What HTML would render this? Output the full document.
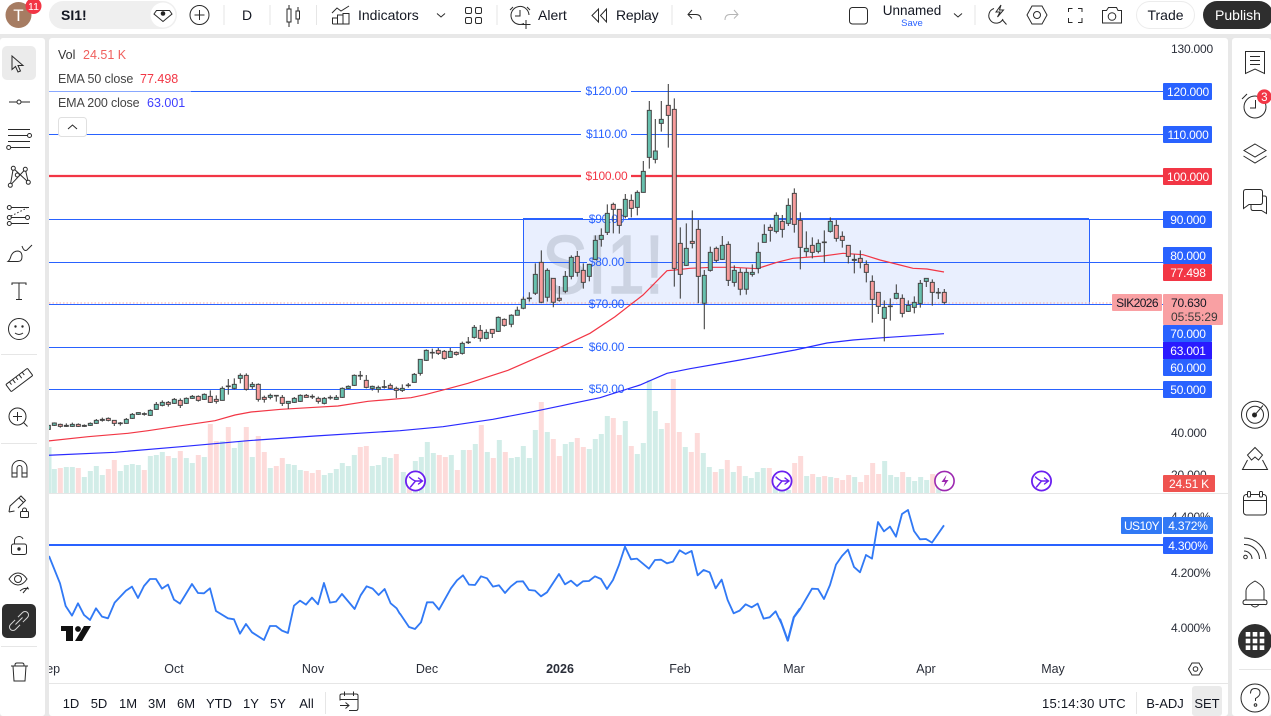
<!DOCTYPE html>
<html><head><meta charset="utf-8"><title>SI1!</title>
<style>
html,body{margin:0;padding:0;background:#e8e8e8;overflow:hidden}
svg{display:block}
text{font-family:"Liberation Sans",sans-serif}
.ax{font-size:12px;fill:#2a2e39;letter-spacing:-.2px}
.lb{font-size:12px;fill:#fff;letter-spacing:-.2px;text-anchor:middle}
.tb{font-size:14px;fill:#131722}
.bb{font-size:13px;fill:#131722;text-anchor:middle}
.tm{font-size:12.5px;fill:#2a2e39;text-anchor:middle}
.pr{font-size:12px;letter-spacing:-.2px;text-anchor:middle;fill:#2962ff}
.lg{font-size:12.5px}
.ic{fill:none;stroke:#2a2a2a;stroke-width:1}
.w{fill:none;stroke:#454545;stroke-width:3.3}
.g{fill:#67c0ae;stroke:#454545;stroke-width:3}
.r{fill:#f89c9c;stroke:#454545;stroke-width:3}
.vg{fill:none;stroke:#d2ede8;stroke-width:15}
.vr{fill:none;stroke:#fddbda;stroke-width:15}
</style></head><body>
<svg width="1271" height="716" viewBox="0 0 1271 716" xmlns="http://www.w3.org/2000/svg">
<rect width="1271" height="716" fill="#e8e8e8"/>
<!-- panels -->
<rect x="0" y="0" width="1271" height="34" fill="#fff"/>
<rect x="0" y="38" width="45" height="678" rx="3" fill="#fff"/>
<rect x="49" y="38" width="1179" height="678" rx="3" fill="#fff"/>
<rect x="1232" y="38" width="39" height="678" rx="3" fill="#fff"/>

<!-- chart clip -->
<svg x="49" y="38" width="1179" height="646" viewBox="49 38 1179 646">
<!-- volume -->
<g transform="translate(0,420) scale(.3333)">
<path class="vg" d="M147 81V219M163 147V219M199 141V219M217 141V219M253 171V219M271 153V219M289 138V219M307 165V219M361 153V219M379 135V219M397 132V219M415 135V219M451 108V219M469 105V219M487 96V219M523 114V219M559 114V219M577 129V219M613 111V219M667 63V219M703 84V219M721 66V219M757 111V219M811 144V219M865 132V219M883 135V219M901 150V219M973 165V219M991 159V219M1009 147V219M1027 129V219M1045 138V219M1063 105V219M1117 138V219M1135 135V219M1153 111V219M1171 114V219"/>
<path class="vr" d="M181 144V219M235 144V219M325 147V219M343 120V219M433 150V219M505 108V219M541 93V219M595 105V219M631 12V219M649 63V219M685 21V219M739 21V219M775 48V219M793 96V219M829 138V219M847 114V219M919 153V219M937 159V219M955 150V219M1081 81V219M1099 78V219M1189 102V219"/>
</g>
<g transform="translate(400,370) scale(.3333)">
<path class="vg" d="M10 306V369M46 273V369M64 261V369M82 216V369M100 249V369M154 255V369M190 240V369M226 222V369M262 246V369M298 210V369M334 264V369M352 261V369M370 228V369M388 264V369M406 180V369M442 186V369M496 222V369M514 216V369M568 237V369M586 207V369M604 192V369M622 138V369M676 153V369M712 252V369M730 219V369M748 30V369M766 123V369M784 177V369M856 231V369M910 249V369M928 291V369M964 297V369M1000 306V369M1036 318V369M1054 324V369M1072 306V369M1090 294V369M1126 330V369M1144 340V369"/>
<path class="vr" d="M28 350V369M118 255V369M136 261V369M172 300V369M208 240V369M244 165V369M280 264V369M316 246V369M424 96V369M460 207V369M478 258V369M532 204V369M550 231V369M640 144V369M658 195V369M694 228V369M802 159V369M820 27V369M838 186V369M874 246V369M892 189V369M946 306V369M982 270V369M1018 288V369M1108 294V369"/>
</g>
<g transform="translate(780,430) scale(.3333)">
<path class="vg" d="M8 180V189M26 180V189M80 138V189M116 141V189M152 141V189M224 141V189M314 93V189M332 135V189M350 141V189M386 141V189M404 153V189M422 141V189M440 150V189M476 150V189"/>
<path class="vr" d="M44 99V189M62 78V189M98 132V189M134 138V189M170 144V189M188 150V189M206 135V189M242 156V189M260 135V189M278 99V189M296 132V189M368 126V189M458 132V189"/>
</g>

<!-- rectangle -->
<rect x="523.5" y="219.5" width="566" height="85" fill="#e9effe" stroke="#2962ff" stroke-width="1"/>
<text x="542" y="293" font-size="83" fill="#ccd3e2" stroke="#ccd3e2" stroke-width="1.5" textLength="122" lengthAdjust="spacingAndGlyphs">SI1!</text>

<!-- horizontal lines -->
<g stroke="#2962ff" stroke-width="1" fill="none">
<path d="M49 91.5H581M631 91.5H1163"/>
<path d="M49 134.5H581M631 134.5H1163"/>
<path d="M49 219.5H583M628 219.5H1163"/>
<path d="M49 262.5H587M626 262.5H1163"/>
<path d="M49 304.5H587M626 304.5H1163"/>
<path d="M49 347.5H583M628 347.5H1163"/>
<path d="M49 389.5H583M628 389.5H1163"/>
<path d="M523 219H583M628 219H1089" stroke-width="2"/>
</g>
<path d="M49 176H581M631 176H1163" stroke="#f23645" stroke-width="2.2" fill="none"/>
<path d="M49 303H1112" stroke="#f7a5a5" stroke-width="1" stroke-dasharray="1.5 2" fill="none"/>

<text class="pr" x="606.5" y="95">$120.00</text>
<text class="pr" x="606.5" y="138">$110.00</text>
<text class="pr" x="606.5" y="180" style="fill:#f23645">$100.00</text>
<text class="pr" x="606.5" y="223">$90.00</text>
<text class="pr" x="606.5" y="266">$80.00</text>
<text class="pr" x="606.5" y="308">$70.00</text>
<text class="pr" x="606.5" y="351">$60.00</text>
<text class="pr" x="606.5" y="393">$50.00</text>

<!-- EMA lines -->
<polyline fill="none" stroke="#f23645" stroke-width="1.2" points="48,441 88,436.7 128,433.3 148,430.7 181,425.7 215,420.7 235,415 251,412 281,409.3 315,407.3 338,406 368,401.3 411,397.7 425,394.7 448,388.7 468,383.3 508,370.3 556,349.3 590,333.3 615,316.7 643,295 667,270.7 675,270 690,268.3 713,267.3 733,267.3 758,268.7 760,267.7 777,262.3 793,258.3 823,256 843,253.3 863,254.7 880,260 900,265 913,268.3 927,269 944,272"/>
<polyline fill="none" stroke="#2a2aff" stroke-width="1.2" points="48,455.3 115,452.3 181,446.7 248,440.7 315,436 400,430.7 443,426.7 493,419.3 533,411.7 573,403.3 600,397.7 640,385 667,373.3 690,368.7 740,360 795,350 827,343 853,340 883,337.7 944,333.7"/>

<!-- candles group 1 -->
<g transform="translate(48,280) scale(.3333)">
<path class="w" d="M1 432V450M19 427V438M37 431V443M55 430V441M73 428V441M91 430V441M109 433V441M127 427V438M145 417V432M163 413V425M181 412V424M199 421V438M217 426V437M235 414V431M253 399V417M271 397V405M289 397V407M307 388V408M325 366V390M343 361V379M361 363V380M379 354V372M397 355V384M415 352V372M433 345V357M451 346V365M469 340V360M487 331V369M505 346V371M523 319V362M541 297V344M559 295V328M577 280V310M595 280V332M613 306V327M631 310V365M649 347V368M667 341V358M685 346V365M703 345V378M721 364V387M739 351V369M757 343V366M775 342V353M793 343V357M811 350V371M829 351V373M847 346V359M865 345V360M883 322V354M901 316V327M919 283V318M937 273V300M955 285V325M973 317V332M991 317V338M1009 300V326M1027 310V327M1045 320V354M1063 313V336M1081 309V323M1099 279V308M1117 237V287M1135 208V243M1153 206V236M1171 204V225M1189 210V239M1207 204V234M1225 214V227M1243 185V224M1261 171V192M1279 135V176M1297 135V185M1315 148V178M1333 148V174M1351 109V156M1369 115V140"/>
<path class="g" d="M-5 436h12V448h-12zM13 429h12V436h-12zM49 436h12V439h-12zM67 433h12V439h-12zM103 436h12V439h-12zM121 430h12V436h-12zM139 421h12V430h-12zM157 418h12V421h-12zM211 429h12V431h-12zM229 418h12V430h-12zM247 403h12V415h-12zM265 398h12V403h-12zM283 401h12V403h-12zM301 391h12V406h-12zM319 373h12V388h-12zM337 367h12V376h-12zM373 358h12V370h-12zM409 355h12V370h-12zM427 349h12V355h-12zM463 343h12V358h-12zM517 325h12V361h-12zM535 318h12V320h-12zM553 313h12V325h-12zM571 286h12V295h-12zM607 313h12V320h-12zM661 346h12V352h-12zM679 346h12V348h-12zM715 364h12V370h-12zM733 355h12V367h-12zM751 346h12V364h-12zM787 349h12V351h-12zM823 355h12V370h-12zM841 352h12V354h-12zM859 352h12V358h-12zM877 325h12V352h-12zM895 319h12V325h-12zM913 286h12V316h-12zM931 286h12V288h-12zM967 319h12V325h-12zM985 322h12V328h-12zM1003 320h12V322h-12zM1057 325h12V331h-12zM1075 315h12V317h-12zM1093 283h12V307h-12zM1111 238h12V280h-12zM1129 211h12V241h-12zM1147 217h12V219h-12zM1201 214h12V232h-12zM1237 190h12V220h-12zM1255 186h12V188h-12zM1273 142h12V172h-12zM1309 157h12V175h-12zM1345 112h12V154h-12z"/>
<path class="r" d="M31 433h12V439h-12zM85 433h12V439h-12zM175 415h12V421h-12zM193 421h12V430h-12zM355 367h12V373h-12zM391 361h12V376h-12zM445 349h12V361h-12zM481 349h12V367h-12zM499 358h12V364h-12zM589 286h12V328h-12zM625 313h12V358h-12zM643 352h12V358h-12zM697 352h12V370h-12zM769 346h12V352h-12zM805 355h12V364h-12zM949 301h12V322h-12zM1021 316h12V325h-12zM1039 325h12V331h-12zM1165 211h12V220h-12zM1183 214h12V235h-12zM1219 217h12V223h-12zM1291 151h12V175h-12zM1327 148h12V160h-12zM1363 118h12V136h-12z"/>
</g>
<!-- candles group 2 -->
<g transform="translate(500,80) scale(.3333)">
<path class="w" d="M34 703V742M52 680V706M70 650V688M88 637V665M106 550V645M124 511V670M142 565V665M160 595V682M178 618V665M196 573V640M214 526V598M232 513V590M250 550V626M268 553V604M286 466V540M304 445V500M322 373V465M340 368V460M358 388V461M376 342V415M394 343V412M412 331V406M430 243V338M448 63V266M466 117V250M484 63V155M505 12V203M523 55V620M541 442V656M559 430V558M577 391V505M595 420V670M613 570V748M631 500V575M649 500V547M667 468V540M685 484V618M703 556V620M721 565V646M739 565V644M757 553V590M775 487V580"/>
<path class="g" d="M28 706h12V733h-12zM46 691h12V706h-12zM64 658h12V685h-12zM82 654h12V656h-12zM100 583h12V640h-12zM136 571h12V652h-12zM190 589h12V634h-12zM208 532h12V589h-12zM262 553h12V589h-12zM280 481h12V538h-12zM298 466h12V478h-12zM316 400h12V457h-12zM370 358h12V409h-12zM406 337h12V382h-12zM424 274h12V337h-12zM442 91h12V232h-12zM460 213h12V238h-12zM478 118h12V130h-12zM553 505h12V556h-12zM607 586h12V670h-12zM625 517h12V571h-12zM661 496h12V538h-12zM697 571h12V607h-12zM733 577h12V628h-12zM751 577h12V583h-12zM769 517h12V565h-12z"/>
<path class="r" d="M118 547h12V667h-12zM154 595h12V667h-12zM172 655h12V661h-12zM226 529h12V577h-12zM244 571h12V607h-12zM334 373h12V388h-12zM352 388h12V436h-12zM388 361h12V385h-12zM499 76h12V106h-12zM517 88h12V565h-12zM535 490h12V583h-12zM571 484h12V490h-12zM589 448h12V589h-12zM643 505h12V541h-12zM679 493h12V601h-12zM715 577h12V628h-12z"/>
</g>
<!-- candles group 3 -->
<g transform="translate(760,180) scale(.3333)">
<path class="w" d="M13 133V187M31 133V185M49 97V160M67 105V173M85 55V138M103 25V158M121 97V268M139 154V230M157 172V235M175 178V220M193 151V248M211 112V158M229 120V185M247 154V203M265 196V250M283 223V280M301 211V265M319 241V307M337 286V428M355 337V402M373 361V484M391 355V422M409 313V358M427 343V412M445 361V396M463 349V400M481 300V383M499 295V321M517 298V377M535 324V357M553 327V373"/>
<path class="g" d="M7 163h12V187h-12zM43 106h12V154h-12zM79 76h12V130h-12zM133 205h12V215h-12zM169 190h12V214h-12zM187 186h12V188h-12zM205 124h12V154h-12zM277 238h12V241h-12zM367 382h12V415h-12zM385 378h12V380h-12zM403 340h12V355h-12zM439 376h12V394h-12zM457 367h12V382h-12zM475 310h12V370h-12zM493 295h12V304h-12zM529 337h12V339h-12z"/>
<path class="r" d="M25 142h12V151h-12zM61 124h12V148h-12zM97 40h12V133h-12zM115 121h12V202h-12zM151 196h12V217h-12zM223 136h12V175h-12zM241 169h12V181h-12zM259 196h12V229h-12zM295 235h12V247h-12zM313 253h12V277h-12zM331 304h12V358h-12zM349 337h12V379h-12zM421 355h12V400h-12zM511 307h12V337h-12zM547 337h12V367h-12z"/>
</g>

<!-- legend wash -->
<rect x="49" y="89" width="142" height="5" fill="#fff" opacity=".45"/>

<!-- events -->
<g fill="#fff" stroke="#6a1ff0" stroke-width="1.8" stroke-linecap="round">
<g transform="translate(415.5,481)"><circle r="9.6"/><path fill="none" stroke-width="1.4" d="M-6-4q3 3 6 4h6M3-3l4 3-4 3M-5 6l5-6"/></g>
<g transform="translate(782,481)"><circle r="9.6"/><path fill="none" stroke-width="1.4" d="M-6-4q3 3 6 4h6M3-3l4 3-4 3M-5 6l5-6"/></g>
<g transform="translate(1041.5,481)"><circle r="9.6"/><path fill="none" stroke-width="1.4" d="M-6-4q3 3 6 4h6M3-3l4 3-4 3M-5 6l5-6"/></g>
</g>
<g transform="translate(944.5,481)"><circle r="9.6" fill="#fff" stroke="#9c27b0" stroke-width="1.6"/><path d="M2-6l-5 7h3.5l-1.5 5 5-7H.5z" fill="#9c27b0"/></g>

<!-- pane separator -->
<path d="M49 493.5H1228" stroke="#e6e6e6" stroke-width="1"/>

<!-- lower pane -->
<path d="M49 545H1163" stroke="#2962ff" stroke-width="2"/>
<g fill="none" stroke="#3179f5" stroke-width="5.5" stroke-linejoin="round">
<polyline transform="translate(0,420) scale(.3333)" points="147,408 180,490 197,558 216,587 234,550 252,585 270,600 288,565 306,590 324,595 344,548 378,512 396,500 414,534 432,498 450,477 468,477 486,506 504,494 522,539 540,551 576,492 594,519 612,520 630,505 648,573 684,595 702,598 720,641 738,612 756,637 792,660 810,618 828,618 846,632 864,639 882,557 900,542 918,554 936,533 954,553 972,489 990,548 1008,545 1026,522 1064,567 1082,526 1100,499 1118,506 1136,525 1154,507 1172,550 1190,565 1200,582"/>
<polyline transform="translate(400,370) scale(.3333)" points="0,731 27,771 45,777 63,757 81,697 99,697 117,719 153,655 171,631 189,616 207,644 225,645 243,619 261,625 279,650 297,646 315,669 333,649 351,635 369,634 387,660 405,662 423,679 441,667 477,612 495,643 513,632 531,648 549,634 567,633 585,619 603,627 621,657 639,630 657,585 675,530 693,568 711,566 747,596 765,570 783,569 801,580 819,575 839,541 857,552 875,543 893,616 911,600 929,607 947,655 965,629 983,690 1001,730 1019,722 1037,703 1055,712 1073,701 1091,746 1109,742 1127,724 1145,762 1163,812 1181,742 1200,715"/>
<polyline transform="translate(780,430) scale(.3333)" points="0,566 24,632 42,562 60,538 78,507 96,476 114,477 132,507 150,465 168,404 186,378 204,359 222,411 240,427 258,375 276,386 294,276 312,304 330,290 348,320 366,252 384,240 402,303 420,328 438,327 456,338 492,286"/>
</g>

<!-- TV logo -->
<g fill="#111"><path d="M61 626H73V641H66V631H61zM75 641L84 626H91L82 641z"/><circle cx="78" cy="629" r="2.9"/></g>

<!-- time axis -->
<text class="tm" x="49" y="673">Sep</text>
<text class="tm" x="174" y="673">Oct</text>
<text class="tm" x="313" y="673">Nov</text>
<text class="tm" x="427" y="673">Dec</text>
<text class="tm" x="560" y="673" font-weight="bold">2026</text>
<text class="tm" x="680" y="673">Feb</text>
<text class="tm" x="794" y="673">Mar</text>
<text class="tm" x="926" y="673">Apr</text>
<text class="tm" x="1053" y="673">May</text>
</svg>

<path d="M49 683.5H1228" stroke="#e6e6e6" stroke-width="1"/>

<!-- right axis text -->
<text class="ax" x="1171" y="53">130.000</text>
<text class="ax" x="1171" y="437">40.000</text>
<text class="ax" x="1171" y="479">20.000</text>
<text class="ax" x="1171" y="521">4.400%</text>
<text class="ax" x="1171" y="577">4.200%</text>
<text class="ax" x="1171" y="632">4.000%</text>

<!-- right axis labels -->
<g>
<rect x="1163" y="83" width="49" height="17" rx="1" fill="#2962ff"/><text class="lb" x="1188" y="96">120.000</text>
<rect x="1163" y="126" width="49" height="17" rx="1" fill="#2962ff"/><text class="lb" x="1188" y="139">110.000</text>
<rect x="1163" y="168" width="49" height="17" rx="1" fill="#f23645"/><text class="lb" x="1188" y="181">100.000</text>
<rect x="1163" y="211" width="49" height="17" rx="1" fill="#2962ff"/><text class="lb" x="1188" y="224">90.000</text>
<rect x="1163" y="247" width="49" height="17" rx="1" fill="#2962ff"/><text class="lb" x="1188" y="260">80.000</text>
<rect x="1163" y="264" width="49" height="17" rx="1" fill="#f23645"/><text class="lb" x="1188" y="277">77.498</text>
<rect x="1112" y="294" width="50" height="17" rx="1" fill="#f9a0a3"/><text x="1137" y="307" font-size="12" fill="#131722" text-anchor="middle" letter-spacing="-.6">SIK2026</text>
<rect x="1163" y="294" width="60" height="31" rx="1" fill="#f9a0a3"/><text x="1171" y="307" font-size="12" fill="#131722" letter-spacing="-.2">70.630</text><text x="1171" y="321" font-size="12" fill="#3a3a3a">05:55:29</text>
<rect x="1163" y="325" width="49" height="17" rx="1" fill="#2962ff"/><text class="lb" x="1188" y="338">70.000</text>
<rect x="1163" y="342" width="49" height="17" fill="#2a1aff"/><text class="lb" x="1188" y="355">63.001</text>
<rect x="1163" y="359" width="49" height="17" rx="1" fill="#2962ff"/><text class="lb" x="1188" y="372">60.000</text>
<rect x="1163" y="381" width="49" height="17" rx="1" fill="#2962ff"/><text class="lb" x="1188" y="394">50.000</text>
<rect x="1163" y="475" width="52" height="17" rx="1" fill="#ef5350"/><text class="lb" x="1189" y="488">24.51 K</text>
<rect x="1121" y="517" width="41" height="17" rx="1" fill="#3179f5"/><text class="lb" x="1141.5" y="530" style="letter-spacing:-.6px">US10Y</text>
<rect x="1163" y="517" width="50" height="17" rx="1" fill="#3179f5"/><text class="lb" x="1188" y="530">4.372%</text>
<rect x="1163" y="537" width="50" height="17" rx="1" fill="#2962ff"/><text class="lb" x="1188" y="550">4.300%</text>
</g>
<!-- axis gear -->
<g class="ic" transform="translate(1195.5,669)"><path d="M-7 0L-3.5-6H3.5L7 0 3.5 6H-3.5z"/><circle r="2.3"/></g>

<!-- legend -->
<text class="lg" x="58" y="59" fill="#333">Vol</text><text class="lg" x="83" y="59" fill="#f0605e">24.51 K</text>
<text class="lg" x="58" y="83" fill="#444" letter-spacing="-.1">EMA 50 close</text><text class="lg" x="140" y="83" fill="#f23645">77.498</text>
<text class="lg" x="58" y="107" fill="#444" letter-spacing="-.15">EMA 200 close</text><text class="lg" x="147" y="107" fill="#3f3fff">63.001</text>
<rect x="58.5" y="117.5" width="28" height="19" rx="3" fill="#fff" stroke="#e0e0e0"/><path class="ic" d="M68 129l4.500-4 4.500 4"/>

<!-- TOP BAR -->
<circle cx="18.500" cy="15" r="13" fill="#a67c62"/><text x="18.500" y="21" font-size="17" fill="#fff" text-anchor="middle">T</text>
<circle cx="33.500" cy="6" r="8" fill="#f23645"/><text x="33.500" y="10" font-size="10.500" fill="#fff" text-anchor="middle">11</text>
<rect x="49" y="1" width="128" height="28" rx="14" fill="#efefef"/>
<text x="61" y="20" font-size="14" font-weight="bold" fill="#131722">SI1!</text>
<circle cx="163" cy="15" r="12.500" fill="#fff"/>
<path class="ic" d="M156.500 10.500H169.500L172 14 163 21.500 154 14z"/><circle cx="163" cy="13.500" r="2.300" fill="#222"/>
<g class="ic"><circle cx="199.500" cy="15" r="9.500"/><path d="M199.500 10V20M194.500 15H204.500"/></g>
<g stroke="#e6e6e6"><path d="M224 5V25M270 5V25M316.500 5V25M497 5V25M672 5V25M975 5V25"/></g>
<text class="tb" x="247" y="20" text-anchor="middle">D</text>
<g class="ic"><rect x="287" y="9" width="4" height="13"/><path d="M289 5V9M289 22V27"/><rect x="296" y="11" width="3.500" height="8"/><path d="M298 7V11M298 19V24"/></g>
<g class="ic"><path d="M332.500 24V18H337.500V24M337.500 24V15H343V24M343 24V13.500H349V24H332.500M332 13L337 8 341 11 349 6"/></g>
<text class="tb" x="358" y="20">Indicators</text>
<path class="ic" d="M437 13.500l4 3.500 4-3.500"/>
<g class="ic"><rect x="465.500" y="7.500" width="6" height="6" rx="1.500"/><rect x="475.500" y="7.500" width="6" height="6" rx="1.500"/><rect x="465.500" y="17.500" width="6" height="6" rx="1.500"/><rect x="475.500" y="17.500" width="6" height="6" rx="1.500"/></g>
<g class="ic"><path d="M524 23.500A9 9 0 1 1 529 15M520 10V16H515M526 20V29M521.500 24.500H530.500M510 10L513 7M527 7L530 10"/></g>
<text class="tb" x="538" y="20">Alert</text>
<path class="ic" d="M598.500 9L592 15.500 598.500 22zM606.500 9L600.500 15.500 606.500 22z"/>
<text class="tb" x="616" y="20" letter-spacing="-.2">Replay</text>
<path class="ic" d="M692 10L688 14.500 692 18.500M688 14.500H696Q701 14.500 701 20"/>
<path d="M734 10L738 14.500 734 18.500M738 14.500H730Q725 14.500 725 20" fill="none" stroke="#b5b5b5" stroke-width="1"/>
<rect x="849.500" y="7.500" width="18" height="16.500" rx="3" fill="none" stroke="#2a2a2a" stroke-width="1"/>
<text x="912" y="15" font-size="13.500" fill="#131722" text-anchor="middle">Unnamed</text>
<text x="912" y="26" font-size="9.500" fill="#2962ff" text-anchor="middle">Save</text>
<path class="ic" d="M954 13.500l4 3.500 4-3.500"/>
<g class="ic"><path d="M994 8.500A7.500 7.500 0 1 0 1003 19M1002.500 20L1006.500 24.500M1001 5L996 12H1000L997.500 17 1003.500 10H999.500z"/></g>
<g class="ic"><path d="M1027 15L1032 6H1042L1047 15 1042 24H1032z"/><circle cx="1037" cy="15" r="3.500"/></g>
<g class="ic"><path d="M1068.500 12V8.500H1072.500M1078 8.500H1082V12M1082 18V22.500H1078M1072.500 22.500H1068.500V18"/></g>
<g class="ic"><path d="M1102.500 10.500H1106.500L1108.500 7.500H1116.500L1118 10.500H1121.500V23H1102.500z"/><circle cx="1112" cy="16.500" r="3.800"/></g>
<rect x="1136.500" y="1.500" width="58" height="27" rx="13.500" fill="#fff" stroke="#ececec"/><text class="tb" x="1165.500" y="20" text-anchor="middle">Trade</text>
<rect x="1203" y="1" width="70" height="28" rx="14" fill="#2e2e2e"/><text x="1238" y="20" font-size="14" fill="#fff" text-anchor="middle">Publish</text>

<!-- LEFT TOOLBAR -->
<rect x="2" y="46" width="34" height="34" rx="5" fill="#ebebeb"/>
<path class="ic" d="M12 56V69.500L15.500 66.500 18 72 20.500 71 18 65.500H23z"/>
<g class="ic">
<path d="M9 102H17M21 102H30"/><circle cx="19" cy="102" r="2"/>
<path d="M8 129.500H30M8 135.500H27.500M8 141.500H30M11 147.500H30"/><circle cx="29.500" cy="135.500" r="2"/><circle cx="8.700" cy="147.500" r="2"/>
<path d="M10.300 185.300L13.300 168.300 28.300 182.300M10.300 185.300L25.300 169.300 28.300 182.300"/><circle cx="13.300" cy="168.300" r="2" fill="#fff"/><circle cx="25.300" cy="169.300" r="2" fill="#fff"/><circle cx="10.300" cy="185.300" r="2" fill="#fff"/><circle cx="28.300" cy="182.300" r="2" fill="#fff"/><circle cx="17.300" cy="175" r="2" fill="#fff"/>
<path d="M11 207.500H29M11 223.500H29M11 217.500H25.500"/><path d="M11 216L27 208" stroke-dasharray="1.500 2"/><circle cx="9.300" cy="207.500" r="2"/><circle cx="9.300" cy="217.500" r="2"/><circle cx="27.500" cy="217.500" r="2"/><circle cx="9.300" cy="223.500" r="2"/>
<path d="M8 261.500H18Q22 261.500 22 256.500 22 251.500 18 251 13 251 11 256 10 260 8 261.500zM22 246Q24 252 27 250L32 245"/>
<path d="M12 285V283H26V285M19 283V299.500M16 299.500H22"/>
<circle cx="19" cy="329" r="10.500"/><path d="M15 333Q19 336 23 333"/><circle cx="15.500" cy="326.500" r=".7" fill="#1f1f1f"/><circle cx="22.500" cy="326.500" r=".7" fill="#1f1f1f"/>
<g transform="translate(19.300,380) rotate(-37)"><rect x="-13.500" y="-4.500" width="27" height="9" rx="1"/><path d="M-9-4.500V-1M-5-4.500V0M-1-4.500V-1M3-4.500V0M7-4.500V-1"/></g>
<circle cx="17.500" cy="416.500" r="8.500"/><path d="M23.500 422.500L27.500 426.500M17.500 412V421M13 416.500H22"/>
<path d="M12 477V468A7.500 7.500 0 0 1 27 468V477H22V468A2.500 2.500 0 0 0 17 468V477zM12 473H17M22 473H27"/>
<path d="M9 512L10 506 21 496 25.500 500.500 18 508M14.500 511L9 512M19 498L23.500 502.500"/><rect x="20.500" y="511.500" width="8" height="6" rx="1"/><path d="M22.500 511.500V510A2 2 0 0 1 26.500 510V511.500"/>
<rect x="11.500" y="544" width="15" height="10.500" rx="2"/><path d="M14.500 544V541A4.500 4.500 0 0 1 23 539"/><circle cx="19" cy="549" r="1.200" fill="#1f1f1f"/>
<path d="M9 579Q13 573 18 573 23 573 27 579 23 585 18 585 13 585 9 579z"/><circle cx="18" cy="579" r="3.500"/><path d="M20 591Q24 587 29 589M23 593L28 587"/>
<path d="M11 666H28M15 666V665Q15 663 17 663H22Q24 663 24 665V666M13 666L14 681H25L26 666"/>
</g>
<g stroke="#e6e6e6"><path d="M1 354.500H37M1 443.500H37M1 646.500H37"/></g>
<rect x="2" y="604" width="34" height="34" rx="5" fill="#2e2e2e"/>
<g fill="none" stroke="#d5d5d5" stroke-width="1" transform="translate(19,621) rotate(-45)"><path d="M-2-3.500H-8.500A3.500 3.500 0 0 0-8.500 3.500H-2M2-3.500H8.500A3.500 3.500 0 0 1 8.500 3.500H2M-5 0H5"/></g>

<!-- RIGHT TOOLBAR -->
<g class="ic">
<path d="M1245.500 51.500H1264.500V73.500L1255 69 1245.500 73.500zM1250 56.500H1260M1250 60.500H1260M1250 64.500H1260"/>
<circle cx="1255" cy="107" r="11"/><path d="M1255.500 100V108H1250M1242 99L1247 94"/>
<path d="M1255 144L1266 150.500 1255 157 1244 150.500zM1243.500 156L1255 163 1266.500 156"/>
<path d="M1243.500 192Q1243.500 189.500 1246 189.500H1260Q1262.500 189.500 1262.500 192V202Q1262.500 204.500 1260 204.500H1249L1243.500 208.500zM1262.500 196H1264.500Q1266.500 196 1266.500 198V213.500L1261.500 210.500H1253Q1251 210.500 1251 208V205"/>
<circle cx="1255" cy="414.700" r="13.500"/><circle cx="1255" cy="414.700" r="8.500"/><circle cx="1254.500" cy="415" r="2" fill="#1f1f1f"/><path d="M1255 414.700L1263 405.500"/>
<path d="M1255 447.500L1262.500 455 1258.500 460 1255 457 1251.500 460 1247.500 455zM1247.500 460L1242.500 469.500H1267.500L1262.500 460"/>
<rect x="1243.500" y="494.500" width="23" height="20.500" rx="3"/><path d="M1243.500 500.500H1266.500"/><rect x="1247.500" y="491.500" width="3" height="5.500" rx="1" fill="#fff"/><rect x="1259.500" y="491.500" width="3" height="5.500" rx="1" fill="#fff"/>
<path d="M1244 538A22 22 0 0 1 1266 559M1244 544.500A15 15 0 0 1 1259.500 559M1244 551A8 8 0 0 1 1252 559"/><circle cx="1245.500" cy="557" r="1.800"/>
<path d="M1246 600V591Q1246 586 1255 581 1264 586 1264 591V600M1245 600H1265Q1267 600 1267 602.500T1265 604.500H1245Q1243 604.500 1243 602.500T1245 600zM1251 604.500Q1255 609.500 1259 604.500"/>
<circle cx="1255" cy="698" r="14"/><path d="M1250.500 693.500Q1250.500 688.500 1255 688.500 1260 688.500 1260 693 1260 696 1255.500 698.500V701"/><circle cx="1255.500" cy="705" r="1.300"/>
</g>
<circle cx="1264.300" cy="96.700" r="7.300" fill="#f23645"/><text x="1264.300" y="101" font-size="11.500" fill="#fff" text-anchor="middle">3</text>
<circle cx="1255" cy="641" r="17" fill="#2e2e2e"/>
<g fill="#fff"><rect x="1245.700" y="632" width="4.600" height="4.600"/><rect x="1252.700" y="632" width="4.600" height="4.600"/><rect x="1259.700" y="632" width="4.600" height="4.600"/><rect x="1245.700" y="638.700" width="4.600" height="4.600"/><rect x="1252.700" y="638.700" width="4.600" height="4.600"/><rect x="1259.700" y="638.700" width="4.600" height="4.600"/><rect x="1245.700" y="645.400" width="4.600" height="4.600"/><rect x="1252.700" y="645.400" width="4.600" height="4.600"/><rect x="1259.700" y="645.400" width="4.600" height="4.600"/></g>
<path d="M1239 669.500H1271" stroke="#e6e6e6"/>

<!-- BOTTOM BAR -->
<text class="bb" x="71" y="708">1D</text>
<text class="bb" x="99" y="708">5D</text>
<text class="bb" x="128" y="708">1M</text>
<text class="bb" x="157" y="708">3M</text>
<text class="bb" x="186" y="708">6M</text>
<text class="bb" x="219" y="708">YTD</text>
<text class="bb" x="251" y="708">1Y</text>
<text class="bb" x="278" y="708">5Y</text>
<text class="bb" x="306.500" y="708">All</text>
<path d="M325.500 692V714M1136.500 692V714" stroke="#e6e6e6"/>
<g class="ic"><path d="M340 700.500V695.500Q340 694 342 694H356Q358 694 358 695.500V708Q358 710.500 356 710.500H349M340 699.500H358M344.500 691.500V696M353.500 691.500V696M340 705.500H348.500M345.500 702.500L349 705.500 345.500 708.500"/></g>
<text x="1042" y="708" font-size="13" fill="#131722" letter-spacing=".25">15:14:30 UTC</text>
<text class="bb" x="1165" y="708">B-ADJ</text>
<rect x="1192" y="686" width="30" height="30" rx="3" fill="#ebebeb"/><text class="bb" x="1207" y="708">SET</text>
</svg>
</body></html>
